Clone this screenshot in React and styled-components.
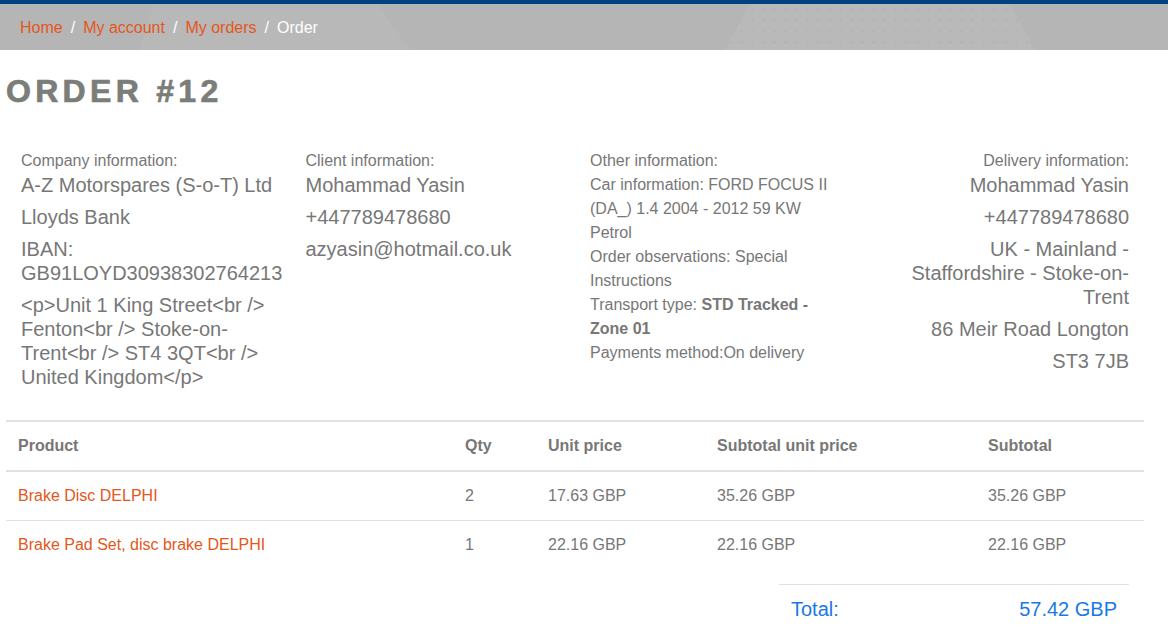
import React from "react";
import styled, { createGlobalStyle } from "styled-components";

const GlobalStyle = createGlobalStyle`
  html, body { margin: 0; padding: 0; background: #fff; }
  body {
    font-family: "Liberation Sans", Arial, sans-serif;
    color: #777;
    font-size: 16px;
    line-height: 24px;
  }
  * { box-sizing: border-box; }
`;

const BreadcrumbBar = styled.nav`
  position: relative;
  height: 50px;
  border-top: 4px solid #00427f;
  background: #b5b5b5;
  display: flex;
  align-items: center;
  padding: 1px 0 0 20px;
  overflow: hidden;
  &::before {
    content: "";
    position: absolute;
    top: 0;
    bottom: 0;
    left: 140px;
    width: 270px;
    background: #b8b8b8;
    clip-path: polygon(5% 0, 88% 0, 100% 100%, 0 100%);
  }
  &::after {
    content: "";
    position: absolute;
    top: 0;
    bottom: 0;
    left: 725px;
    width: 310px;
    background-color: #b9b9b9;
    background-image: radial-gradient(circle, #b4b4b4 1.1px, transparent 1.5px);
    background-size: 11px 11px;
    clip-path: polygon(8% 0, 92% 0, 100% 100%, 0 100%);
  }
`;

const Crumbs = styled.ol`
  position: relative;
  z-index: 1;
  display: flex;
  list-style: none;
  margin: 0;
  padding: 0;
  font-size: 16px;
  line-height: 24px;
`;

const Crumb = styled.li`
  color: ${(p) => (p.$active ? "#ffffff" : "#e4571b")};
  &:not(:first-child)::before {
    content: "/";
    color: #ffffff;
    padding: 0 8px;
  }
`;

const Main = styled.main`
  padding: 22px 24px 20px 6px;
`;

const Title = styled.h1`
  margin: 0 0 39px;
  font-size: 32px;
  line-height: 38px;
  font-weight: 700;
  letter-spacing: 4.3px;
  color: #7a7d78;
  -webkit-text-stroke: 0.7px #7a7d78;
`;

const InfoGrid = styled.section`
  display: grid;
  grid-template-columns: repeat(4, minmax(0, 1fr));
  margin-bottom: 23px;
`;

const InfoCol = styled.div`
  padding: 0 15px;
  text-align: ${(p) => (p.$right ? "right" : "left")};
`;

const Label = styled.div`
  font-size: 16px;
  line-height: 24px;
`;

const Value = styled.p`
  margin: 0 0 8px;
  font-size: 20px;
  line-height: 24px;
`;

const Line = styled.p`
  margin: 0;
  font-size: 16px;
  line-height: 24px;
  b { font-weight: 700; }
`;

const Table = styled.table`
  width: 100%;
  border-collapse: collapse;
  font-size: 16px;
  line-height: 24px;
`;

const Th = styled.th`
  text-align: left;
  font-weight: 700;
  color: #777;
  padding: 12px;
  border-top: 2px solid #dee2e6;
  border-bottom: 2px solid #dee2e6;
`;

const Td = styled.td`
  padding: 12px;
  color: ${(p) => (p.$link ? "#e4571b" : "#777")};
  border-top: ${(p) => (p.$first ? "none" : "1px solid #dee2e6")};
`;

const TotalTable = styled.table`
  width: 350px;
  margin: 15px 15px 0 auto;
  border-collapse: collapse;
  font-size: 20px;
  line-height: 24px;
  color: #1a78e6;
`;

const TotalCell = styled.td`
  padding: 12px;
  border-top: 1px solid #dee2e6;
  text-align: ${(p) => (p.$right ? "right" : "left")};
`;

const columns = [
  { label: "Product", width: 447 },
  { label: "Qty", width: 83 },
  { label: "Unit price", width: 169 },
  { label: "Subtotal unit price", width: 271 },
  { label: "Subtotal", width: 168 },
];

const rows = [
  { name: "Brake Disc DELPHI", qty: 2, unit: "17.63 GBP", sub: "35.26 GBP", total: "35.26 GBP" },
  { name: "Brake Pad Set, disc brake DELPHI", qty: 1, unit: "22.16 GBP", sub: "22.16 GBP", total: "22.16 GBP" },
];

export default function App() {
  return (
    <>
      <GlobalStyle />
      <BreadcrumbBar>
        <Crumbs>
          <Crumb>Home</Crumb>
          <Crumb>My account</Crumb>
          <Crumb>My orders</Crumb>
          <Crumb $active>Order</Crumb>
        </Crumbs>
      </BreadcrumbBar>
      <Main>
        <Title>ORDER #12</Title>
        <InfoGrid>
          <InfoCol>
            <Label>Company information:</Label>
            <Value>A-Z Motorspares (S-o-T) Ltd</Value>
            <Value>Lloyds Bank</Value>
            <Value>IBAN: GB91LOYD30938302764213</Value>
            <Value>{"<p>Unit 1 King Street<br /> Fenton<br /> Stoke-on-Trent<br /> ST4 3QT<br /> United Kingdom</p>"}</Value>
          </InfoCol>
          <InfoCol>
            <Label>Client information:</Label>
            <Value>Mohammad Yasin</Value>
            <Value>+447789478680</Value>
            <Value>azyasin@hotmail.co.uk</Value>
          </InfoCol>
          <InfoCol>
            <Label>Other information:</Label>
            <Line>Car information: FORD FOCUS II (DA_) 1.4 2004 - 2012 59 KW Petrol</Line>
            <Line>Order observations: Special Instructions</Line>
            <Line>
              Transport type: <b>STD Tracked - Zone 01</b>
            </Line>
            <Line>Payments method:On delivery</Line>
          </InfoCol>
          <InfoCol $right>
            <Label>Delivery information:</Label>
            <Value>Mohammad Yasin</Value>
            <Value>+447789478680</Value>
            <Value>UK - Mainland - Staffordshire - Stoke-on-Trent</Value>
            <Value>86 Meir Road Longton</Value>
            <Value>ST3 7JB</Value>
          </InfoCol>
        </InfoGrid>
        <Table>
          <thead>
            <tr>
              {columns.map((c) => (
                <Th key={c.label} style={{ width: c.width }}>
                  {c.label}
                </Th>
              ))}
            </tr>
          </thead>
          <tbody>
            {rows.map((r, i) => (
              <tr key={r.name}>
                <Td $link $first={i === 0}>{r.name}</Td>
                <Td $first={i === 0}>{r.qty}</Td>
                <Td $first={i === 0}>{r.unit}</Td>
                <Td $first={i === 0}>{r.sub}</Td>
                <Td $first={i === 0}>{r.total}</Td>
              </tr>
            ))}
          </tbody>
        </Table>
        <TotalTable>
          <tbody>
            <tr>
              <TotalCell>Total:</TotalCell>
              <TotalCell $right>57.42 GBP</TotalCell>
            </tr>
          </tbody>
        </TotalTable>
      </Main>
    </>
  );
}
